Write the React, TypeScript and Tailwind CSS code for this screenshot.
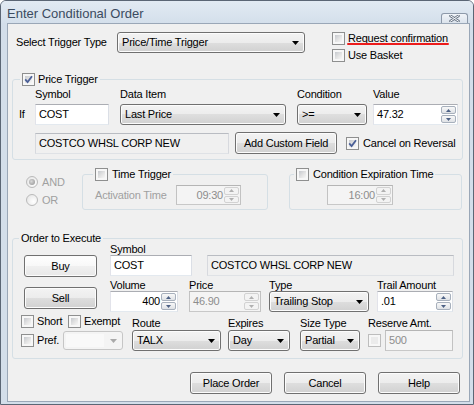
import React from "react";

type Kids = { children?: React.ReactNode; className?: string };

function Check({ checked = false, disabled = false }: { checked?: boolean; disabled?: boolean }) {
  return (
    <span
      className={`relative inline-block w-[13px] h-[13px] shrink-0 border ${
        disabled ? "border-[#bdbdbd]" : "border-[#8e8f8f]"
      } bg-[#f7f7f7] p-[2px]`}
    >
      <span
        className={`block w-full h-full ${
          disabled ? "bg-[#ebebeb]" : "bg-[linear-gradient(135deg,#c6c9ce_0%,#e4e4e4_55%,#f7f7f7_100%)]"
        }`}
      />
      {checked && (
        <svg className="absolute left-[1px] top-[1px]" width="9" height="9" viewBox="0 0 9 9">
          <path d="M1.2 4.3 L3.6 7 L8 1.2" stroke="#4a5f97" strokeWidth="1.8" fill="none" />
        </svg>
      )}
    </span>
  );
}

function Radio({ checked = false }: { checked?: boolean }) {
  return (
    <span className="w-[12px] h-[12px] rounded-full border border-[#bababa] bg-[radial-gradient(circle_at_65%_65%,#ffffff,#e2e2e2)] flex items-center justify-center shrink-0">
      {checked && (
        <span className="w-[6px] h-[6px] rounded-full bg-[radial-gradient(circle_at_40%_40%,#d8d8d8,#8e8e8e)]" />
      )}
    </span>
  );
}

function Spin({ disabled = false }: { disabled?: boolean }) {
  const arrow = disabled ? "#b0b0b0" : "#4d6185";
  const btn = disabled
    ? "border-[#d2d2d2] bg-[#f3f3f3]"
    : "border-[#a7b0bc] bg-[linear-gradient(#f8f8f8,#dfe2e6)]";
  return (
    <div className="flex flex-col w-[16px] py-[1px] pr-[1px] gap-[1px] shrink-0">
      <div className={`flex-1 flex items-center justify-center rounded-[2px] border ${btn}`}>
        <svg width="5" height="3" viewBox="0 0 5 3">
          <path d="M2.5 0 L5 3 H0 Z" fill={arrow} />
        </svg>
      </div>
      <div className={`flex-1 flex items-center justify-center rounded-[2px] border ${btn}`}>
        <svg width="5" height="3" viewBox="0 0 5 3">
          <path d="M0 0 H5 L2.5 3 Z" fill={arrow} />
        </svg>
      </div>
    </div>
  );
}

function Box({
  className = "",
  children,
  right = false,
  kind = "normal",
  spin = false,
}: Kids & { right?: boolean; kind?: "normal" | "readonly" | "disabled"; spin?: boolean }) {
  const k =
    kind === "normal"
      ? "bg-white border-t-[#abadb3] border-l-[#e2e3ea] border-r-[#dbdfe6] border-b-[#e3e9ef]"
      : kind === "readonly"
      ? "bg-[#f0f0f0] border-t-[#b9bcc2] border-l-[#d7d9de] border-r-[#d7d9de] border-b-[#dfe2e6]"
      : "bg-[#f4f4f4] border-t-[#b5b5b5] border-l-[#c2c2c2] border-r-[#c2c2c2] border-b-[#c8c8c8]";
  const t = kind === "disabled" ? "text-[#8d8d8d]" : "text-black";
  return (
    <div className={`flex items-stretch border ${k} ${className}`}>
      <div
        className={`flex-1 flex items-center ${
          right ? "justify-end pr-[1px]" : "pl-[3px]"
        } ${t} text-[11px] whitespace-nowrap overflow-hidden`}
      >
        {children}
      </div>
      {spin && <Spin disabled={kind === "disabled"} />}
    </div>
  );
}

function Combo({ className = "", children, disabled = false }: Kids & { disabled?: boolean }) {
  return (
    <div
      className={`flex items-center border rounded-[3px] ${
        disabled
          ? "border-[#c6c6c6] bg-[#f4f4f4]"
          : "border-[#707070] bg-[linear-gradient(#f3f3f3_0%,#ececec_50%,#dedede_50%,#d1d1d1_100%)] shadow-[inset_0_0_0_1px_#fcfcfc]"
      } ${className}`}
    >
      {disabled ? (
        <div className="flex-1 self-stretch m-[2px] mr-[6px] bg-[#f9f9f9]" />
      ) : (
        <div className="flex-1 pl-[4px] text-[11px] whitespace-nowrap">{children}</div>
      )}
      <svg className="mr-[5px] shrink-0" width="7" height="4" viewBox="0 0 7 4">
        <path d="M0 0 H7 L3.5 4 Z" fill={disabled ? "#a9a9a9" : "#000000"} />
      </svg>
    </div>
  );
}

function Btn({ className = "", children, light = false }: Kids & { light?: boolean }) {
  return (
    <div
      className={`flex items-center justify-center h-[22px] rounded-[3px] border border-[#707070] shadow-[inset_0_0_0_1px_#fcfcfc] text-[11px] ${
        light
          ? "bg-[linear-gradient(#fefefe_0%,#f8f8f8_50%,#f0f0f0_50%,#e8e8e8_100%)]"
          : "bg-[linear-gradient(#f3f3f3_0%,#ececec_50%,#dedede_50%,#d1d1d1_100%)]"
      } ${className}`}
    >
      {children}
    </div>
  );
}

function Lbl({ children, className = "" }: Kids) {
  return <div className={`text-[11px] whitespace-nowrap ${className}`}>{children}</div>;
}

export default function App() {
  return (
    <div className="w-[474px] h-[405px] font-['Liberation_Sans',Arial,sans-serif] tracking-[-0.2px] text-black">
      <div className="w-[474px] h-[405px] border border-[#5b6675] rounded-t-[6px] bg-[#d3deea] flex flex-col">
        {/* Title bar */}
        <div className="h-[22px] flex items-start rounded-t-[5px] bg-[linear-gradient(#e2eaf3,#d4dfeb)]">
          <span className="pl-[6px] pt-[5px] text-[13px] leading-[15px] tracking-[0px] text-[#3b4b60]">
            Enter Conditional Order
          </span>
          <div className="ml-auto mr-[5px] mt-[12px] w-[27px] h-[10px] rounded-t-[3px] border border-b-0 border-[#8d99a9] bg-[linear-gradient(#f1f4f8,#dbe3ec)] flex items-center justify-center">
            <svg width="11" height="7" viewBox="0 0 11 7">
              <path d="M1.5 0.8 L9.5 6.2 M9.5 0.8 L1.5 6.2" stroke="#6c7787" strokeWidth="2.6" strokeLinecap="round" />
              <path d="M1.5 0.8 L9.5 6.2 M9.5 0.8 L1.5 6.2" stroke="#f7f9fb" strokeWidth="1" strokeLinecap="round" />
            </svg>
          </div>
        </div>

        {/* Frame body */}
        <div className="flex">
          <div className="w-[6px]" />
          {/* Client */}
          <div className="w-[463px] h-[379px] border border-[#9aa7b7] bg-[#f0f0f0] flex flex-col">
            {/* Row A */}
            <div className="flex items-start mt-[8px]">
              <div className="ml-[8px] w-[101px] h-[21px] flex items-center">
                <Lbl>Select Trigger Type</Lbl>
              </div>
              <Combo className="w-[188px] h-[21px]">Price/Time Trigger</Combo>
              <div className="ml-[27px] flex flex-col gap-[4px]">
                <div className="flex items-center h-[13px]">
                  <Check />
                  <span className="relative ml-[3px] text-[11px] leading-[13px]">
                    Request confirmation
                    <span className="absolute left-[-1px] right-[-1px] top-[11px] h-[2px] rounded-full bg-[#ec1c1c]" />
                  </span>
                </div>
                <div className="flex items-center h-[13px]">
                  <Check />
                  <span className="ml-[3px] text-[11px] leading-[13px]">Use Basket</span>
                </div>
              </div>
            </div>

            {/* Price Trigger */}
            <fieldset className="ml-[4px] mt-[11px] w-[451px] border border-[#d5dfe5] rounded-[3px] pb-[5px]">
              <legend className="ml-[7px] px-[2px]">
                <span className="flex items-center h-[13px]">
                  <Check checked />
                  <span className="ml-[3px] text-[11px] leading-[13px]">Price Trigger</span>
                </span>
              </legend>
              <div className="flex items-end mt-[1px]">
                <div className="w-[22px] pl-[6px] h-[21px] flex items-center text-[11px]">If</div>
                <div className="w-[74px] flex flex-col">
                  <Lbl className="leading-[14px] h-[14px]">Symbol</Lbl>
                  <Box className="mt-[3px] w-[74px] h-[21px]">COST</Box>
                </div>
                <div className="ml-[11px] w-[166px] flex flex-col">
                  <Lbl className="leading-[14px] h-[14px]">Data Item</Lbl>
                  <Combo className="mt-[3px] w-[166px] h-[21px]">Last Price</Combo>
                </div>
                <div className="ml-[11px] w-[70px] flex flex-col">
                  <Lbl className="leading-[14px] h-[14px]">Condition</Lbl>
                  <Combo className="mt-[3px] w-[70px] h-[21px]">&gt;=</Combo>
                </div>
                <div className="ml-[6px] w-[85px] flex flex-col">
                  <Lbl className="leading-[14px] h-[14px]">Value</Lbl>
                  <Box className="mt-[3px] w-[85px] h-[21px]" spin>
                    47.32
                  </Box>
                </div>
              </div>
              <div className="flex items-center mt-[7px]">
                <Box kind="readonly" className="ml-[22px] w-[194px] h-[21px]">
                  COSTCO WHSL CORP NEW
                </Box>
                <Btn className="ml-[6px] w-[102px] h-[21px]">Add Custom Field</Btn>
                <div className="ml-[9px] flex items-center">
                  <Check checked />
                  <span className="ml-[4px] text-[11px]">Cancel on Reversal</span>
                </div>
              </div>
            </fieldset>

            {/* Row B */}
            <div className="flex items-start mt-[8px]">
              <div className="w-[74px] pl-[18px] pt-[8px] flex flex-col gap-[6px] text-[#a0a0a0]">
                <div className="flex items-center h-[12px]">
                  <Radio checked />
                  <span className="ml-[4px] text-[11px]">AND</span>
                </div>
                <div className="flex items-center h-[12px]">
                  <Radio />
                  <span className="ml-[4px] text-[11px]">OR</span>
                </div>
              </div>
              <fieldset className="w-[186px] border border-[#d5dfe5] rounded-[3px] pb-[4px]">
                <legend className="ml-[10px] px-[2px]">
                  <span className="flex items-center h-[13px]">
                    <Check />
                    <span className="ml-[4px] text-[11px] leading-[13px]">Time Trigger</span>
                  </span>
                </legend>
                <div className="flex items-center mt-[4px] pl-[12px]">
                  <Lbl className="w-[81px] text-[#a0a0a0]">Activation Time</Lbl>
                  <Box kind="disabled" right spin className="w-[65px] h-[20px]">
                    09:30
                  </Box>
                </div>
              </fieldset>
              <fieldset className="ml-[21px] w-[173px] border border-[#d5dfe5] rounded-[3px] pb-[4px]">
                <legend className="ml-[4px] px-[2px]">
                  <span className="flex items-center h-[13px]">
                    <Check />
                    <span className="ml-[4px] text-[11px] leading-[13px]">Condition Expiration Time</span>
                  </span>
                </legend>
                <div className="flex items-center mt-[4px] pl-[37px]">
                  <Box kind="disabled" right spin className="w-[66px] h-[20px]">
                    16:00
                  </Box>
                </div>
              </fieldset>
            </div>

            {/* Order to Execute */}
            <fieldset className="ml-[4px] mt-[22px] w-[451px] border border-[#d5dfe5] rounded-[3px] pb-[7px]">
              <legend className="ml-[6px] px-[2px]">
                <span className="block text-[11px] leading-[12px] h-[12px]">Order to Execute</span>
              </legend>
              <div className="flex">
                <div className="ml-[11px] w-[73px] flex flex-col">
                  <Btn light className="mt-[11px] w-[73px]">
                    Buy
                  </Btn>
                  <Btn className="mt-[10px] w-[73px]">Sell</Btn>
                </div>
                <div className="ml-[13px] flex flex-col">
                  <div className="flex items-end">
                    <div className="w-[82px] flex flex-col">
                      <Lbl className="leading-[11px] h-[11px]">Symbol</Lbl>
                      <Box className="w-[82px] h-[21px]">COST</Box>
                    </div>
                    <Box kind="readonly" className="ml-[15px] w-[247px] h-[21px]">
                      COSTCO WHSL CORP NEW
                    </Box>
                  </div>
                  <div className="flex items-end mt-[4px]">
                    <div className="w-[68px] flex flex-col">
                      <Lbl className="leading-[11px] h-[11px]">Volume</Lbl>
                      <Box right spin className="w-[68px] h-[21px]">
                        400
                      </Box>
                    </div>
                    <div className="ml-[11px] w-[72px] flex flex-col">
                      <Lbl className="leading-[11px] h-[11px]">Price</Lbl>
                      <Box kind="disabled" spin className="w-[72px] h-[21px]">
                        46.90
                      </Box>
                    </div>
                    <div className="ml-[8px] w-[100px] flex flex-col">
                      <Lbl className="leading-[11px] h-[11px]">Type</Lbl>
                      <Combo className="w-[100px] h-[21px]">Trailing Stop</Combo>
                    </div>
                    <div className="ml-[8px] w-[76px] flex flex-col">
                      <Lbl className="leading-[11px] h-[11px]">Trail Amount</Lbl>
                      <Box spin className="w-[76px] h-[21px]">
                        .01
                      </Box>
                    </div>
                  </div>
                </div>
              </div>
              <div className="flex items-start mt-[3px] ml-[8px]">
                <div className="w-[111px] flex flex-col">
                  <div className="flex items-center h-[13px]">
                    <div className="w-[47px] flex items-center">
                      <Check />
                      <span className="ml-[3px] text-[11px]">Short</span>
                    </div>
                    <Check />
                    <span className="ml-[3px] text-[11px]">Exempt</span>
                  </div>
                  <div className="flex items-center h-[21px] mt-[2px]">
                    <div className="w-[42px] flex items-center">
                      <Check />
                      <span className="ml-[3px] text-[11px]">Pref.</span>
                    </div>
                    <Combo disabled className="w-[60px] h-[19px]" />
                  </div>
                </div>
                <div className="w-[89px] flex flex-col pt-[2px]">
                  <Lbl className="leading-[13px] h-[13px]">Route</Lbl>
                  <Combo className="w-[89px] h-[21px]">TALX</Combo>
                </div>
                <div className="ml-[7px] w-[62px] flex flex-col pt-[2px]">
                  <Lbl className="leading-[13px] h-[13px]">Expires</Lbl>
                  <Combo className="w-[62px] h-[21px]">Day</Combo>
                </div>
                <div className="ml-[10px] w-[60px] flex flex-col pt-[2px]">
                  <Lbl className="leading-[13px] h-[13px]">Size Type</Lbl>
                  <Combo className="w-[60px] h-[21px]">Partial</Combo>
                </div>
                <div className="ml-[8px] flex flex-col pt-[2px]">
                  <Lbl className="leading-[13px] h-[13px]">Reserve Amt.</Lbl>
                  <div className="flex items-center h-[21px]">
                    <Check disabled />
                    <Box kind="disabled" className="ml-[4px] w-[68px] h-[21px]">
                      500
                    </Box>
                  </div>
                </div>
              </div>
            </fieldset>

            {/* Bottom buttons */}
            <div className="flex justify-end gap-[12px] pr-[9px] mt-[13px]">
              <Btn className="w-[82px]">Place Order</Btn>
              <Btn className="w-[82px]">Cancel</Btn>
              <Btn className="w-[82px]">Help</Btn>
            </div>
          </div>
          <div className="w-[3px]" />
        </div>
      </div>
    </div>
  );
}
